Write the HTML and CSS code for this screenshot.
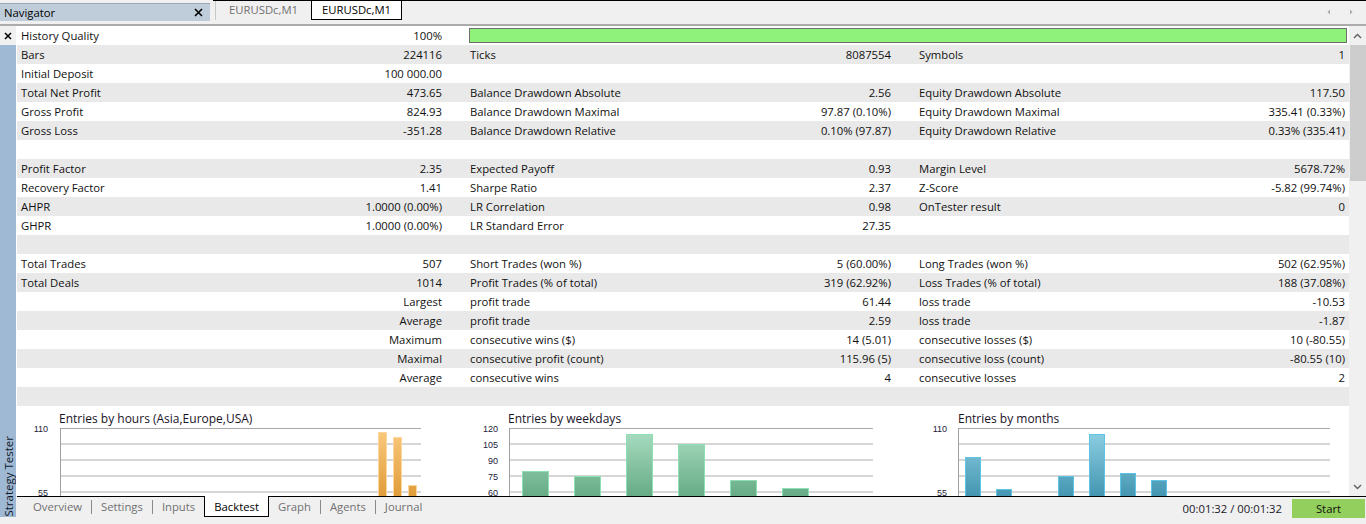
FILE: index.html
```html
<!DOCTYPE html>
<html>
<head>
<meta charset="utf-8">
<title>Strategy Tester</title>
<link rel="stylesheet" href="styles.css">
</head>
<body>
<div class="top">
  <div class="nav">
    <span>Navigator</span>
    <svg class="xicon" width="9" height="9" viewBox="0 0 9 9"><path d="M1 1L8 8M8 1L1 8" stroke="#000" stroke-width="1.6"/></svg>
  </div>
  <div class="tabs">
    <div class="ctab">EURUSDc,M1</div>
    <div class="ctab active">EURUSDc,M1</div>
    <div class="arrows">
      <svg width="28" height="8" viewBox="0 0 28 8"><path d="M3 1.5L0.5 4L3 6.5Z" fill="#a9a9a9"/><path d="M23 1.5L25.5 4L23 6.5Z" fill="#a9a9a9"/></svg>
    </div>
  </div>
</div>
<div class="body">
  <div class="side">
    <div class="side-x"><svg width="8" height="8" viewBox="0 0 8 8"><path d="M1 1L7 7M7 1L1 7" stroke="#000" stroke-width="1.5"/></svg></div>
    <div class="side-bar"><span class="side-label">Strategy Tester</span></div>
  </div>
  <div class="right">
    <div class="main">
      <div class="report">
        <div class="row"><div class="cell"><span>History Quality</span><span>100%</span></div><div class="quality"></div></div>
        <div class="row"><div class="cell"><span>Bars</span><span>224116</span></div><div class="cell"><span>Ticks</span><span>8087554</span></div><div class="cell"><span>Symbols</span><span>1</span></div></div>
        <div class="row"><div class="cell"><span>Initial Deposit</span><span>100 000.00</span></div><div class="cell"></div><div class="cell"></div></div>
        <div class="row"><div class="cell"><span>Total Net Profit</span><span>473.65</span></div><div class="cell"><span>Balance Drawdown Absolute</span><span>2.56</span></div><div class="cell"><span>Equity Drawdown Absolute</span><span>117.50</span></div></div>
        <div class="row"><div class="cell"><span>Gross Profit</span><span>824.93</span></div><div class="cell"><span>Balance Drawdown Maximal</span><span>97.87 (0.10%)</span></div><div class="cell"><span>Equity Drawdown Maximal</span><span>335.41 (0.33%)</span></div></div>
        <div class="row"><div class="cell"><span>Gross Loss</span><span>-351.28</span></div><div class="cell"><span>Balance Drawdown Relative</span><span>0.10% (97.87)</span></div><div class="cell"><span>Equity Drawdown Relative</span><span>0.33% (335.41)</span></div></div>
        <div class="row"></div>
        <div class="row"><div class="cell"><span>Profit Factor</span><span>2.35</span></div><div class="cell"><span>Expected Payoff</span><span>0.93</span></div><div class="cell"><span>Margin Level</span><span>5678.72%</span></div></div>
        <div class="row"><div class="cell"><span>Recovery Factor</span><span>1.41</span></div><div class="cell"><span>Sharpe Ratio</span><span>2.37</span></div><div class="cell"><span>Z-Score</span><span>-5.82 (99.74%)</span></div></div>
        <div class="row"><div class="cell"><span>AHPR</span><span>1.0000 (0.00%)</span></div><div class="cell"><span>LR Correlation</span><span>0.98</span></div><div class="cell"><span>OnTester result</span><span>0</span></div></div>
        <div class="row"><div class="cell"><span>GHPR</span><span>1.0000 (0.00%)</span></div><div class="cell"><span>LR Standard Error</span><span>27.35</span></div><div class="cell"></div></div>
        <div class="row"></div>
        <div class="row"><div class="cell"><span>Total Trades</span><span>507</span></div><div class="cell"><span>Short Trades (won %)</span><span>5 (60.00%)</span></div><div class="cell"><span>Long Trades (won %)</span><span>502 (62.95%)</span></div></div>
        <div class="row"><div class="cell"><span>Total Deals</span><span>1014</span></div><div class="cell"><span>Profit Trades (% of total)</span><span>319 (62.92%)</span></div><div class="cell"><span>Loss Trades (% of total)</span><span>188 (37.08%)</span></div></div>
        <div class="row"><div class="cell"><span></span><span>Largest</span></div><div class="cell"><span>profit trade</span><span>61.44</span></div><div class="cell"><span>loss trade</span><span>-10.53</span></div></div>
        <div class="row"><div class="cell"><span></span><span>Average</span></div><div class="cell"><span>profit trade</span><span>2.59</span></div><div class="cell"><span>loss trade</span><span>-1.87</span></div></div>
        <div class="row"><div class="cell"><span></span><span>Maximum</span></div><div class="cell"><span>consecutive wins ($)</span><span>14 (5.01)</span></div><div class="cell"><span>consecutive losses ($)</span><span>10 (-80.55)</span></div></div>
        <div class="row"><div class="cell"><span></span><span>Maximal</span></div><div class="cell"><span>consecutive profit (count)</span><span>115.96 (5)</span></div><div class="cell"><span>consecutive loss (count)</span><span>-80.55 (10)</span></div></div>
        <div class="row"><div class="cell"><span></span><span>Average</span></div><div class="cell"><span>consecutive wins</span><span>4</span></div><div class="cell"><span>consecutive losses</span><span>2</span></div></div>
        <div class="row"></div>
        <div class="charts">
          <svg class="chart" width="449" height="100" viewBox="0 0 449 100">
            <defs><linearGradient id="gOr" gradientUnits="userSpaceOnUse" x1="0" y1="22" x2="0" y2="92"><stop offset="0" stop-color="#fbcb7f"/><stop offset="1" stop-color="#df9b38"/></linearGradient></defs>
            <text class="ct" x="42" y="17">Entries by hours (Asia,Europe,USA)</text>
            <line class="g0" x1="43" y1="22.5" x2="404" y2="22.5"/>
            <line class="g1" x1="43" y1="38" x2="404" y2="38"/>
            <line class="g1" x1="43" y1="54" x2="404" y2="54"/>
            <line class="g1" x1="43" y1="70" x2="404" y2="70"/>
            <line class="g1" x1="43" y1="86" x2="404" y2="86"/>
            <line class="ax" x1="43.5" y1="22" x2="43.5" y2="100"/>
            <text class="yl" x="31" y="25.5">110</text>
            <text class="yl" x="31" y="89.5">55</text>
            <rect class="bo" x="361.5" y="26.5" width="8" height="80"/>
            <rect class="bo" x="376.5" y="31.5" width="8" height="80"/>
            <rect class="bo" x="391.5" y="79.5" width="8" height="80"/>
          </svg>
          <svg class="chart" width="449" height="100" viewBox="0 0 449 100">
            <defs><linearGradient id="gGr" gradientUnits="userSpaceOnUse" x1="0" y1="26" x2="0" y2="92"><stop offset="0" stop-color="#a7dcc0"/><stop offset="1" stop-color="#64aa84"/></linearGradient></defs>
            <text class="ct" x="42" y="17">Entries by weekdays</text>
            <line class="g0" x1="43" y1="22.5" x2="407" y2="22.5"/>
            <line class="g1" x1="43" y1="38" x2="407" y2="38"/>
            <line class="g1" x1="43" y1="54" x2="407" y2="54"/>
            <line class="g1" x1="43" y1="70" x2="407" y2="70"/>
            <line class="g1" x1="43" y1="86" x2="407" y2="86"/>
            <line class="ax" x1="43.5" y1="22" x2="43.5" y2="100"/>
            <text class="yl" x="32" y="25.5">120</text>
            <text class="yl" x="32" y="41.5">105</text>
            <text class="yl" x="32" y="57.5">90</text>
            <text class="yl" x="32" y="73.5">75</text>
            <text class="yl" x="32" y="89.5">60</text>
            <rect class="bg" x="56.5" y="65.5" width="26" height="80"/>
            <rect class="bg" x="108.5" y="70.5" width="26" height="80"/>
            <rect class="bg" x="160.5" y="28.5" width="26" height="80"/>
            <rect class="bg" x="212.5" y="38.5" width="26" height="80"/>
            <rect class="bg" x="264.5" y="74.5" width="26" height="80"/>
            <rect class="bg" x="316.5" y="82.5" width="26" height="80"/>
          </svg>
          <svg class="chart" width="434" height="100" viewBox="0 0 434 100">
            <defs><linearGradient id="gBl" gradientUnits="userSpaceOnUse" x1="0" y1="26" x2="0" y2="92"><stop offset="0" stop-color="#8dcfe3"/><stop offset="1" stop-color="#4294b0"/></linearGradient></defs>
            <text class="ct" x="43" y="17">Entries by months</text>
            <line class="g0" x1="43" y1="22.5" x2="415" y2="22.5"/>
            <line class="g1" x1="43" y1="38" x2="415" y2="38"/>
            <line class="g1" x1="43" y1="54" x2="415" y2="54"/>
            <line class="g1" x1="43" y1="70" x2="415" y2="70"/>
            <line class="g1" x1="43" y1="86" x2="415" y2="86"/>
            <line class="ax" x1="43.5" y1="22" x2="43.5" y2="100"/>
            <text class="yl" x="32" y="25.5">110</text>
            <text class="yl" x="32" y="89.5">55</text>
            <rect class="bb" x="50.5" y="51.5" width="15" height="80"/>
            <rect class="bb" x="81.5" y="83.5" width="15" height="80"/>
            <rect class="bb" x="143.5" y="70.5" width="15" height="80"/>
            <rect class="bb" x="174.5" y="28.5" width="15" height="80"/>
            <rect class="bb" x="205.5" y="67.5" width="15" height="80"/>
            <rect class="bb" x="236.5" y="74.5" width="15" height="80"/>
          </svg>
        </div>
      </div>
      <div class="vscroll">
        <div class="sb-btn"><svg width="9" height="6" viewBox="0 0 9 6"><path d="M1 5L4.5 1.5L8 5" fill="none" stroke="#606060" stroke-width="1.4"/></svg></div>
        <div class="thumb"></div>
        <div class="sb-space"></div>
        <div class="sb-btn"><svg width="9" height="6" viewBox="0 0 9 6"><path d="M1 1L4.5 4.5L8 1" fill="none" stroke="#606060" stroke-width="1.4"/></svg></div>
      </div>
    </div>
    <div class="bottom">
      <div class="btabs">
        <div class="btab">Overview</div>
        <div class="sep"></div>
        <div class="btab">Settings</div>
        <div class="sep"></div>
        <div class="btab">Inputs</div>
        <div class="btab active">Backtest</div>
        <div class="btab">Graph</div>
        <div class="sep"></div>
        <div class="btab">Agents</div>
        <div class="sep"></div>
        <div class="btab">Journal</div>
      </div>
      <div class="bright">
        <span class="time">00:01:32 / 00:01:32</span>
        <div class="start">Start</div>
      </div>
    </div>
  </div>
</div>
</body>
</html>
```
FILE: styles.css
```css
* { box-sizing: border-box; margin: 0; padding: 0; }
body {
  width: 1366px;
  height: 524px;
  overflow: hidden;
  background: #f0f0f0;
  font-family: "Open Sans", "Noto Sans", sans-serif;
  font-size: 11.3px;
  color: #111;
}
.top {
  display: flex;
  height: 26px;
  border-bottom: 2px solid #ababab;
}
.nav {
  width: 210px;
  margin-top: 3px;
  height: 18px;
  border-top: 1px solid #9aa8b6;
  background: #bfcddb;
  display: flex;
  align-items: center;
  justify-content: space-between;
  padding: 0 7px 0 4px;
  color: #000;
}
.tabs {
  flex: 1;
  margin-left: 3px;
  border-top: 1px solid #000;
  display: flex;
  align-items: flex-start;
}
.ctab {
  width: 96px;
  height: 19px;
  margin-left: 2px;
  padding-left: 13px;
  line-height: 18px;
  border-left: 1px solid #c8c8c8;
  color: #707070;
}
.ctab.active {
  width: 91px;
  margin-left: 0;
  padding-left: 10px;
  background: #fff;
  border: 1px solid #000;
  border-top: none;
  color: #000;
}
.arrows {
  margin-left: auto;
  margin-right: 11px;
  margin-top: 7px;
  display: flex;
}
.body {
  display: flex;
  height: 498px;
}
.side {
  width: 16px;
  display: flex;
  flex-direction: column;
}
.side-x {
  height: 19px;
  display: flex;
  align-items: center;
  justify-content: center;
}
.side-bar {
  height: 472px;
  background: #9fb8d4;
  display: flex;
  flex-direction: column;
  justify-content: flex-end;
  align-items: center;
}
.side-label {
  writing-mode: vertical-rl;
  transform: rotate(180deg);
  color: #101828;
  white-space: nowrap;
  font-size: 11.5px;
}
.right {
  width: 1350px;
  display: flex;
  flex-direction: column;
}
.main {
  height: 470px;
  display: flex;
  border-left: 1px solid #fff;
}
.report {
  width: 1332px;
  height: 470px;
  overflow: hidden;
  background: #fff;
}
.row {
  display: grid;
  grid-template-columns: 421px 421px 426px;
  column-gap: 28px;
  padding: 0 4px;
  height: 19px;
  line-height: 19px;
  background: #fff;
}
.row:nth-child(even) { background: #e9e9e9; }
.cell {
  display: flex;
  justify-content: space-between;
  white-space: nowrap;
}
.quality {
  grid-column: 2 / 4;
  margin: 2px -2px 2px -1px;
  background: #8ff27b;
  border: 1px solid #6e6e6e;
}
.charts {
  display: grid;
  grid-template-columns: 449px 449px 434px;
  background: #fff;
  height: 100px;
}
.chart { display: block; }
.ct {
  font-family: "Open Sans", "Noto Sans", sans-serif;
  font-size: 12px;
  fill: #1a1428;
}
.yl {
  font-family: "Liberation Sans", Arial, sans-serif;
  font-size: 9px;
  fill: #22223a;
  text-anchor: end;
}
.g0 { stroke: #a9a9a9; stroke-width: 1; }
.g1 { stroke: #c9c9c9; stroke-width: 1.6; }
.ax { stroke: #a0a0a0; stroke-width: 1; }
.bo { fill: url(#gOr); stroke: #fcd69c; stroke-width: 1; }
.bg { fill: url(#gGr); stroke: #8fdfb4; stroke-width: 1; }
.bb { fill: url(#gBl); stroke: #5ec4e4; stroke-width: 1; }
.vscroll {
  width: 17px;
  background: #f0f0f0;
  display: flex;
  flex-direction: column;
}
.sb-btn {
  height: 19px;
  display: flex;
  align-items: center;
  justify-content: center;
}
.thumb {
  height: 136px;
  margin: 0 0 0 1px;
  background: #cdcdcd;
}
.sb-space { flex: 1; }
.bottom {
  height: 28px;
  margin-left: 1px;
  border-top: 1px solid #000;
  display: flex;
  align-items: flex-start;
}
.btabs {
  display: flex;
  margin-left: 7px;
  align-items: flex-start;
}
.btab {
  padding: 0 9px;
  line-height: 19px;
  color: #707070;
  white-space: nowrap;
}
.btab.active {
  margin-top: -1px;
  height: 21px;
  padding: 1px 9px 0;
  background: #fff;
  border: 1px solid #000;
  border-top: none;
  color: #000;
}
.sep {
  width: 1px;
  height: 14px;
  margin-top: 3px;
  background: #8a8a8a;
}
.bright {
  margin-left: auto;
  display: flex;
  align-items: flex-start;
  margin-top: 2px;
  margin-right: 1px;
}
.time {
  line-height: 19px;
  margin-right: 10px;
  color: #1a1a2a;
}
.start {
  width: 73px;
  height: 19px;
  line-height: 19px;
  text-align: center;
  background: #92cf5c;
  color: #111;
}
```
